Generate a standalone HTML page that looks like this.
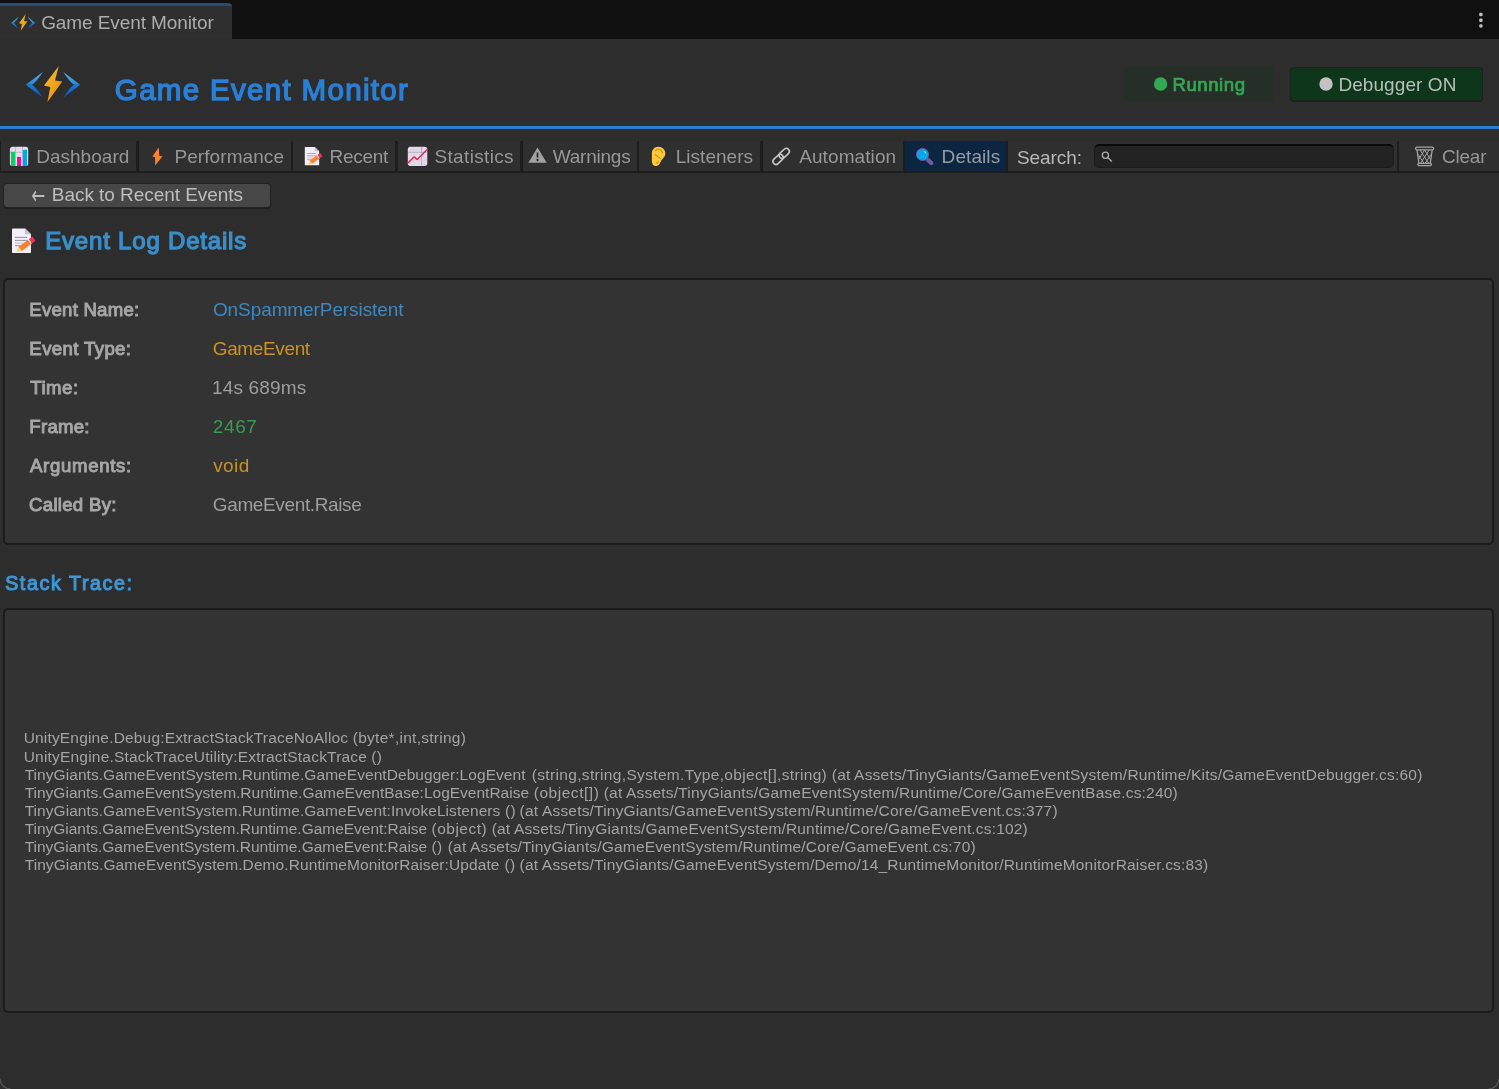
<!DOCTYPE html>
<html><head><meta charset="utf-8"><title>Game Event Monitor</title>
<style>
*{box-sizing:border-box;margin:0;padding:0}
html,body{width:1499px;height:1089px;overflow:hidden;background:#2d2d2d;font-family:"Liberation Sans",sans-serif;color:#c4c4c4}
.abs{position:absolute}
.t{position:absolute;white-space:nowrap;line-height:1}
#tabbar{left:0;top:0;width:1499px;height:39px;background:#101010}
#wtab{left:0;top:3px;width:232px;height:36px;background:#2f2f2f;border-top:3px solid #264d73;border-radius:0 4px 0 0}
#hline{left:0;top:126px;width:1499px;height:3px;background:#2a7bd3}
#toolbar{left:0;top:141px;width:1499px;height:32px;background:#2f2f2f;border-bottom:2px solid #1d1d1d}
.sep{position:absolute;top:141px;height:30px;background:#1d1d1d}
#seltab{left:905px;top:141px;width:101px;height:30px;background:#0c2540}
.box{position:absolute;left:3px;width:1491px;background:#333333;border:2px solid #1b1b1b;border-radius:5px}
#icons{position:absolute;left:0;top:0;pointer-events:none}
</style></head><body>
<div class="abs" id="tabbar"></div>
<div class="abs" id="wtab"></div>
<div class="abs" id="hline"></div>

<div class="abs" style="left:1124px;top:66px;width:150px;height:36px;background:#252f28"></div>
<div class="abs" style="left:1291px;top:68px;width:191px;height:32px;background:#0d361b;border-radius:3px;box-shadow:0 0 0 1px #202120, 0 1px 0 1px #191a19"></div>

<div class="abs" id="toolbar"></div>
<div class="sep" style="left:0;width:1px"></div>
<div class="sep" style="left:136px;width:3px"></div>
<div class="sep" style="left:291px;width:2px"></div>
<div class="sep" style="left:395px;width:3px"></div>
<div class="sep" style="left:520px;width:3px"></div>
<div class="sep" style="left:637px;width:2px"></div>
<div class="sep" style="left:760px;width:3px"></div>
<div class="sep" style="left:903px;width:2px"></div>
<div class="sep" style="left:1006px;width:2px"></div>
<div class="sep" style="left:1397px;width:2px"></div>
<div class="abs" id="seltab"></div>
<div class="abs" style="left:1094px;top:144px;width:300px;height:24px;background:#222222;border:1.5px solid #1c1c1c;border-top:2px solid #090909;border-radius:5px"></div>

<div class="abs" style="left:4px;top:184px;width:266px;height:23px;background:#474747;border-radius:3px;box-shadow:0 0 0 1px #232323, 0 1px 0 1px #1f1f1f"></div>

<div class="box" style="top:278px;height:267px"></div>
<div class="box" style="top:608px;height:405px"></div>

<div id="texts" style="position:absolute;left:0;top:0;width:1499px;height:1089px;will-change:transform">
<div class="t" id="tabtitle" style="left:41.20px;top:13px;font-size:19px;color:#acacac;letter-spacing:-0.096px">Game Event Monitor</div>
<div class="t" id="title" style="left:114.87px;top:75px;font-size:29.5px;color:#2a7fd6;letter-spacing:1.322px;-webkit-text-stroke:1.36px #2a7fd6">Game Event Monitor</div>
<div class="t" id="running" style="left:1172.45px;top:76px;font-size:18.6px;color:#34a853;letter-spacing:0.545px;-webkit-text-stroke:0.74px #34a853">Running</div>
<div class="t" id="debugger" style="left:1338.43px;top:75px;font-size:19px;color:#b6c0b8;letter-spacing:0.070px">Debugger ON</div>
<div class="t" id="n1" style="left:36.14px;top:147px;font-size:19px;color:#979797;letter-spacing:0.030px">Dashboard</div>
<div class="t" id="n2" style="left:174.44px;top:147px;font-size:19px;color:#979797;letter-spacing:0.075px">Performance</div>
<div class="t" id="n3" style="left:329.57px;top:147px;font-size:19px;color:#979797;letter-spacing:-0.274px">Recent</div>
<div class="t" id="n4" style="left:434.44px;top:147px;font-size:19px;color:#979797;letter-spacing:0.349px">Statistics</div>
<div class="t" id="n5" style="left:552.74px;top:147px;font-size:19px;color:#979797;letter-spacing:-0.225px">Warnings</div>
<div class="t" id="n6" style="left:675.67px;top:147px;font-size:19px;color:#979797;letter-spacing:0.039px">Listeners</div>
<div class="t" id="n7" style="left:799.13px;top:147px;font-size:19px;color:#979797;letter-spacing:0.105px">Automation</div>
<div class="t" id="n8" style="left:941.61px;top:147px;font-size:19px;color:#949ca6;letter-spacing:0.078px">Details</div>
<div class="t" id="n9" style="left:1016.99px;top:148px;font-size:19px;color:#b8b8b8;letter-spacing:-0.068px">Search:</div>
<div class="t" id="n10" style="left:1442.04px;top:147px;font-size:19px;color:#979797;letter-spacing:-0.224px">Clear</div>
<div class="t" id="back" style="left:51.82px;top:185px;font-size:19px;color:#bebebe;letter-spacing:-0.046px">Back to Recent Events</div>
<div class="t" id="eld" style="left:45.26px;top:229px;font-size:24px;color:#3a8fca;letter-spacing:0.803px;-webkit-text-stroke:1.25px #3a8fca">Event Log Details</div>
<div class="t" id="stt" style="left:5.13px;top:574px;font-size:19.7px;color:#3f96d6;letter-spacing:1.589px;-webkit-text-stroke:1.02px #3f96d6">Stack Trace:</div>
<div class="t" id="l0" style="left:29.33px;top:301px;font-size:18.6px;color:#a6a6a6;letter-spacing:0.233px;-webkit-text-stroke:0.97px #a6a6a6">Event Name:</div>
<div class="t" id="l1" style="left:29.35px;top:340px;font-size:18.6px;color:#a6a6a6;letter-spacing:0.381px;-webkit-text-stroke:0.97px #a6a6a6">Event Type:</div>
<div class="t" id="l2" style="left:30.35px;top:379px;font-size:18.6px;color:#a6a6a6;letter-spacing:0.478px;-webkit-text-stroke:0.97px #a6a6a6">Time:</div>
<div class="t" id="l3" style="left:29.35px;top:418px;font-size:18.6px;color:#a6a6a6;letter-spacing:0.252px;-webkit-text-stroke:0.97px #a6a6a6">Frame:</div>
<div class="t" id="l4" style="left:29.92px;top:457px;font-size:18.6px;color:#a6a6a6;letter-spacing:0.694px;-webkit-text-stroke:0.97px #a6a6a6">Arguments:</div>
<div class="t" id="l5" style="left:29.03px;top:496px;font-size:18.6px;color:#a6a6a6;letter-spacing:0.297px;-webkit-text-stroke:0.97px #a6a6a6">Called By:</div>
<div class="t" id="v0" style="left:212.94px;top:300px;font-size:19px;color:#3c89c2;letter-spacing:-0.092px">OnSpammerPersistent</div>
<div class="t" id="v1" style="left:212.78px;top:339px;font-size:19px;color:#cc9220;letter-spacing:-0.371px">GameEvent</div>
<div class="t" id="v2" style="left:211.99px;top:378px;font-size:19px;color:#9e9e9e;letter-spacing:0.153px">14s 689ms</div>
<div class="t" id="v3" style="left:212.80px;top:417px;font-size:19px;color:#30a04f;letter-spacing:0.616px">2467</div>
<div class="t" id="v4" style="left:213.17px;top:456px;font-size:19px;color:#cc9220;letter-spacing:0.420px">void</div>
<div class="t" id="v5" style="left:212.78px;top:495px;font-size:19px;color:#9e9e9e;letter-spacing:-0.366px">GameEvent.Raise</div>
<div class="t" id="s0_0" style="left:23.68px;top:730px;font-size:15.5px;color:#a4a4a4;letter-spacing:0.174px">UnityEngine.Debug:ExtractStackTraceNoAlloc </div>
<div class="t" id="s0_1" style="left:352.76px;top:730px;font-size:15.5px;color:#a4a4a4;letter-spacing:0.273px">(byte*,int,string)</div>
<div class="t" id="s1_0" style="left:23.68px;top:749px;font-size:15.5px;color:#a4a4a4;letter-spacing:0.203px">UnityEngine.StackTraceUtility:ExtractStackTrace </div>
<div class="t" id="s1_1" style="left:371.17px;top:749px;font-size:15.5px;color:#a4a4a4;letter-spacing:0.549px">()</div>
<div class="t" id="s2_0" style="left:24.66px;top:767px;font-size:15.5px;color:#a4a4a4;letter-spacing:0.058px">TinyGiants.GameEventSystem.Runtime.GameEventDebugger:LogEvent </div>
<div class="t" id="s2_1" style="left:531.76px;top:767px;font-size:15.5px;color:#a4a4a4;letter-spacing:0.338px">(string,string,System.Type,object[],string) </div>
<div class="t" id="s2_2" style="left:831.79px;top:767px;font-size:15.5px;color:#a4a4a4;letter-spacing:0.200px">(at Assets/TinyGiants/GameEventSystem/Runtime/Kits/GameEventDebugger.cs:60)</div>
<div class="t" id="s3_0" style="left:24.66px;top:785px;font-size:15.5px;color:#a4a4a4;letter-spacing:0.002px">TinyGiants.GameEventSystem.Runtime.GameEventBase:LogEventRaise </div>
<div class="t" id="s3_1" style="left:533.76px;top:785px;font-size:15.5px;color:#a4a4a4;letter-spacing:0.529px">(object[]) </div>
<div class="t" id="s3_2" style="left:603.76px;top:785px;font-size:15.5px;color:#a4a4a4;letter-spacing:0.193px">(at Assets/TinyGiants/GameEventSystem/Runtime/Core/GameEventBase.cs:240)</div>
<div class="t" id="s4_0" style="left:24.66px;top:803px;font-size:15.5px;color:#a4a4a4;letter-spacing:0.055px">TinyGiants.GameEventSystem.Runtime.GameEvent:InvokeListeners </div>
<div class="t" id="s4_1" style="left:505.00px;top:803px;font-size:15.5px;color:#a4a4a4;letter-spacing:0.404px">() </div>
<div class="t" id="s4_2" style="left:519.61px;top:803px;font-size:15.5px;color:#a4a4a4;letter-spacing:0.195px">(at Assets/TinyGiants/GameEventSystem/Runtime/Core/GameEvent.cs:377)</div>
<div class="t" id="s5_0" style="left:24.66px;top:821px;font-size:15.5px;color:#a4a4a4;letter-spacing:-0.019px">TinyGiants.GameEventSystem.Runtime.GameEvent:Raise </div>
<div class="t" id="s5_1" style="left:431.61px;top:821px;font-size:15.5px;color:#a4a4a4;letter-spacing:0.470px">(object) </div>
<div class="t" id="s5_2" style="left:491.76px;top:821px;font-size:15.5px;color:#a4a4a4;letter-spacing:0.164px">(at Assets/TinyGiants/GameEventSystem/Runtime/Core/GameEvent.cs:102)</div>
<div class="t" id="s6_0" style="left:24.66px;top:839px;font-size:15.5px;color:#a4a4a4;letter-spacing:-0.019px">TinyGiants.GameEventSystem.Runtime.GameEvent:Raise </div>
<div class="t" id="s6_1" style="left:431.61px;top:839px;font-size:15.5px;color:#a4a4a4;letter-spacing:0.294px">() </div>
<div class="t" id="s6_2" style="left:447.76px;top:839px;font-size:15.5px;color:#a4a4a4;letter-spacing:0.175px">(at Assets/TinyGiants/GameEventSystem/Runtime/Core/GameEvent.cs:70)</div>
<div class="t" id="s7_0" style="left:24.66px;top:857px;font-size:15.5px;color:#a4a4a4;letter-spacing:0.086px">TinyGiants.GameEventSystem.Demo.RuntimeMonitorRaiser:Update </div>
<div class="t" id="s7_1" style="left:504.61px;top:857px;font-size:15.5px;color:#a4a4a4;letter-spacing:0.317px">() </div>
<div class="t" id="s7_2" style="left:519.61px;top:857px;font-size:15.5px;color:#a4a4a4;letter-spacing:0.179px">(at Assets/TinyGiants/GameEventSystem/Demo/14_RuntimeMonitor/RuntimeMonitorRaiser.cs:83)</div>
<div class="t" id="arrow" style="left:31.5px;top:189px;font-size:16.5px;font-family:'DejaVu Sans',sans-serif;color:#bebebe;transform:scale(1,1.5);transform-origin:50% 55%">←</div>
</div>

<svg id="icons" width="1499" height="1089" viewBox="0 0 1499 1089">
<defs>
<linearGradient id="gb1" x1="0" y1="0" x2="0" y2="1"><stop offset="0" stop-color="#58b6f0"/><stop offset="1" stop-color="#2486dc"/></linearGradient>
<linearGradient id="gb2" x1="0" y1="0" x2="0" y2="1"><stop offset="0" stop-color="#1f7bd8"/><stop offset="1" stop-color="#0a4db4"/></linearGradient>
<linearGradient id="gy" x1="0" y1="0" x2="1" y2="1"><stop offset="0" stop-color="#f9c030"/><stop offset="1" stop-color="#e58a08"/></linearGradient>


</defs>
<!-- logos -->
<g>
<path d="M25.7 84.8 L42.9 72 Q35.8 82.6 32 84.8 Z" fill="url(#gb1)"/>
<path d="M25.7 84.8 L32 84.8 Q35.8 87 42.9 97.7 Z" fill="url(#gb2)"/>
<path d="M80.2 84.8 L63.3 72 Q70.2 82.6 74 84.8 Z" fill="url(#gb1)"/>
<path d="M80.2 84.8 L74 84.8 Q70.2 87 63.3 97.7 Z" fill="url(#gb2)"/>
<path d="M58.8 66 L44 85.6 L50.3 86.9 L47.4 101.9 L62.3 81.6 L55 80.6 Z" fill="url(#gy)"/>
</g>
<g transform="translate(23.1 22.5) scale(0.444 0.475) translate(-52.95 -83.9)">
<path d="M25.7 84.8 L42.9 72 Q35.8 82.6 32 84.8 Z" fill="url(#gb1)"/>
<path d="M25.7 84.8 L32 84.8 Q35.8 87 42.9 97.7 Z" fill="url(#gb2)"/>
<path d="M80.2 84.8 L63.3 72 Q70.2 82.6 74 84.8 Z" fill="url(#gb1)"/>
<path d="M80.2 84.8 L74 84.8 Q70.2 87 63.3 97.7 Z" fill="url(#gb2)"/>
<path d="M58.8 66 L44 85.6 L50.3 86.9 L47.4 101.9 L62.3 81.6 L55 80.6 Z" fill="url(#gy)"/>
</g>
<!-- menu dots -->
<rect x="1479.2" y="12.8" width="3.4" height="3.4" rx="1" fill="#bdbdbd"/>
<rect x="1479.2" y="18.5" width="3.4" height="3.4" rx="1" fill="#bdbdbd"/>
<rect x="1479.2" y="24.3" width="3.4" height="3.4" rx="1.4" fill="#bdbdbd"/>
<!-- status dots -->
<circle cx="1160.6" cy="84" r="6.7" fill="#34a853"/>
<circle cx="1326" cy="84" r="6.7" fill="#c2c2c2"/>
<!-- dashboard icon -->
<rect x="9.9" y="146.8" width="18.3" height="19.2" rx="2.6" fill="#e6dcee"/>
<path d="M15.5 147 V166 M22.5 147 V166 M10 152.3 H28" stroke="#b9aec4" stroke-width="0.8" fill="none"/>
<rect x="11" y="151.8" width="4.1" height="14.2" fill="#00d26a"/>
<rect x="17" y="156.9" width="4" height="9.1" fill="#f70a8d"/>
<rect x="22.9" y="149.8" width="4.1" height="16.2" fill="#00a6ed"/>
<!-- lightning -->
<path d="M158.7 147.4 L152.4 156.6 L155.1 157.3 L155.1 165.5 L162.5 156.3 L159.3 155.9 Z" fill="#ff822d"/>
<!-- recent memo -->
<g transform="translate(304.8 146.9) scale(0.755) translate(-12 -228.6)">
<path d="M12 229.4 Q12 228.6 12.8 228.6 L25.1 228.6 L31 234.2 L31 252.2 Q31 253 30.2 253 L12.8 253 Q12 253 12 252.2 Z" fill="#f3eef8"/>
<path d="M25.1 228.6 L31 234.2 L25.1 234.2 Z" fill="#c9c0d5"/>
<path d="M15 237.4 H27 M15 240.4 H27 M15 245.6 H22" stroke="#9b8fa8" stroke-width="1" fill="none"/>
<path d="M15 243.1 H24" stroke="#c5bccf" stroke-width="1" fill="none"/>
<path d="M18.3 247.1 L28.1 239.8 L31 244.2 L21.8 251 Z" fill="#ff822d"/>
<path d="M18.3 247.1 L21.8 251 L16.9 251.8 Z" fill="#ffcf60"/>
<path d="M28.1 239.8 L28.9 238.9 L31.9 243.5 L31 244.2 Z" fill="#d3e0dc"/>
<path d="M28.9 238.9 L31.8 236.9 Q32.4 236.6 32.9 237.2 L35 240.2 Q35.3 240.8 34.8 241.3 L31.9 243.5 Z" fill="#f92f60"/>
</g>
<!-- statistics icon -->
<rect x="407.8" y="146.8" width="19.5" height="19.1" rx="2.6" fill="#e3d9eb"/>
<path d="M408 152.3 H427.2 M421.6 147 V165.8" stroke="#b5a9bf" stroke-width="0.9" fill="none"/>
<path d="M413.5 147 V165.8 M408 160 H427.2" stroke="#d6cbe0" stroke-width="0.8" fill="none"/>
<path d="M408 163 L413.6 157.3 Q414.3 156.7 415 157.3 L416.3 159 Q417 159.7 417.7 159 L427.2 149.4" stroke="#f5194f" stroke-width="1.4" fill="none"/>
<!-- warning -->
<path d="M537.5 147.6 L546.7 162.8 L528.4 162.8 Z" fill="#a2a2a2"/>
<path d="M537.5 152.6 V157.6" stroke="#2a2a2a" stroke-width="1.7" fill="none"/><circle cx="537.5" cy="160" r="1.15" fill="#2a2a2a"/>
<!-- ear -->
<path d="M658.3 146.7 C662.5 146.7 665.3 149.8 665.3 153.3 C665.3 156 663.8 157.6 662.3 159.3 C660.8 161 660.5 162.5 659.5 164 C658.5 165.6 657 166 655.8 166 C653.5 166 651.9 164.2 651.9 161.5 L651.9 153.5 C651.9 149.6 654.5 146.7 658.3 146.7 Z" fill="#ffc83d"/>
<path d="M655.4 150.8 C656.6 148.9 660.4 148.7 661.4 150.8 L662.4 153" stroke="#e08a00" stroke-width="1.2" fill="none" stroke-linecap="round"/>
<path d="M655.3 154.6 L660.3 158.4" stroke="#e08a00" stroke-width="1.1" fill="none" stroke-linecap="round"/>
<path d="M655.5 162.6 Q658 162.5 658.6 160.2 Q659.2 163.8 656.5 163.6 Z" fill="#e08a00"/>
<!-- link -->
<g fill="none" stroke="#c8c8c8" stroke-width="1.6">
<rect x="-5.9" y="-3" width="11.8" height="6" rx="3" transform="translate(778.1 159.4) rotate(-43)"/>
<rect x="-5.9" y="-3" width="11.8" height="6" rx="3" transform="translate(784.2 153.4) rotate(-43)"/>
</g>
<!-- details magnifier -->
<path d="M927 159 L931.2 163" stroke="#6b5b9e" stroke-width="4.4" stroke-linecap="round" fill="none"/>
<circle cx="922.5" cy="154.4" r="6" fill="#00a6ed" stroke="#7d5ea6" stroke-width="0.9"/>
<path d="M924.3 151.2 Q925.6 151.6 925.6 152.8" stroke="#ffffff" stroke-width="1" fill="none" stroke-linecap="round"/>
<!-- search icon -->
<circle cx="1105.4" cy="155.2" r="3.1" fill="none" stroke="#ababab" stroke-width="1.3"/>
<path d="M1107.7 157.5 L1111.8 161.6" stroke="#ababab" stroke-width="1.4" fill="none"/>
<!-- trash -->
<g fill="none" stroke="#a4a4a4" stroke-width="1.3">
<rect x="1415.6" y="147.2" width="18" height="2.6" rx="1.3"/>
<path d="M1417 150 L1418.9 163 M1432.2 150 L1430.3 163"/>
<rect x="1417.8" y="163.4" width="13.6" height="2.2" rx="1.1"/>
<path d="M1420 150 L1428.5 163 M1424.6 150 L1430.6 159.5 M1418.2 154.5 L1423.8 163 M1429.2 150 L1420.7 163 M1424.6 150 L1418.6 159.5 M1431 154.5 L1425.4 163" stroke-width="1"/>
</g>
<!-- window corners -->
<path d="M0 1078.5 A10.5 10.5 0 0 0 10.5 1089" fill="none" stroke="#555555" stroke-width="1.3"/>
<path d="M1499 1078.5 A10.5 10.5 0 0 1 1488.5 1089" fill="none" stroke="#555555" stroke-width="1.3"/>
<!-- memo big -->
<g>
<path d="M12 229.4 Q12 228.6 12.8 228.6 L25.1 228.6 L31 234.2 L31 252.2 Q31 253 30.2 253 L12.8 253 Q12 253 12 252.2 Z" fill="#f3eef8"/>
<path d="M25.1 228.6 L31 234.2 L25.1 234.2 Z" fill="#c9c0d5"/>
<path d="M15 237.4 H27 M15 240.4 H27 M15 245.6 H22" stroke="#9b8fa8" stroke-width="1" fill="none"/>
<path d="M15 243.1 H24" stroke="#c5bccf" stroke-width="1" fill="none"/>
<path d="M18.3 247.1 L28.1 239.8 L31 244.2 L21.8 251 Z" fill="#ff822d"/>
<path d="M18.3 247.1 L21.8 251 L16.9 251.8 Z" fill="#ffcf60"/>
<path d="M28.1 239.8 L28.9 238.9 L31.9 243.5 L31 244.2 Z" fill="#d3e0dc"/>
<path d="M28.9 238.9 L31.8 236.9 Q32.4 236.6 32.9 237.2 L35 240.2 Q35.3 240.8 34.8 241.3 L31.9 243.5 Z" fill="#f92f60"/>
</g>
</svg>
</body></html>
